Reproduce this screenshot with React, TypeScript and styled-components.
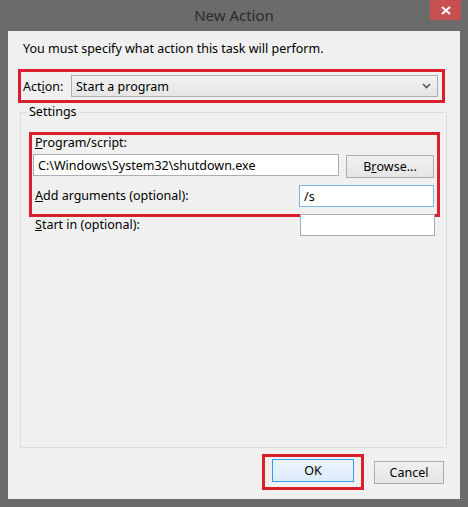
import React from 'react';
import styled, { createGlobalStyle } from 'styled-components';

const GlobalStyle = createGlobalStyle`
  html, body {
    margin: 0;
    padding: 0;
    background: #6b6b6b;
  }
  body {
    font-family: 'Noto Sans', 'Open Sans', sans-serif;
    font-size: 12.5px;
    color: #000;
  }
`;

const Frame = styled.div`
  width: 468px;
  height: 507px;
  display: flex;
  flex-direction: column;
  background: #6b6b6b;
  box-sizing: border-box;
`;

const TitleBar = styled.div`
  position: relative;
  height: 31px;
  display: flex;
  align-items: center;
  justify-content: center;
  flex-shrink: 0;
`;

const Title = styled.div`
  font-size: 15px;
  color: #2b2b2b;
  margin-top: -1px;
`;

const CloseButton = styled.div`
  position: absolute;
  top: 0;
  right: 7px;
  width: 31px;
  height: 20px;
  background: #c75050;
  display: flex;
  align-items: center;
  justify-content: center;
`;

const Client = styled.div`
  flex: 1;
  margin: 0 8px 8px;
  background: #f0f0f0;
  display: flex;
  flex-direction: column;
  padding: 10px 0 9px;
  box-sizing: border-box;
`;

const Intro = styled.div`
  line-height: 16px;
  padding-left: 15px;
  margin-bottom: 12px;
`;

const Highlight = styled.div<{ $pad: string }>`
  border: 3px solid #d9202c;
  padding: ${(p) => p.$pad};
  box-sizing: border-box;
`;

const ActionRow = styled(Highlight)`
  margin: 0 15px 0 10px;
  display: flex;
  align-items: center;
`;

const ActionLabel = styled.span`
  width: 48px;
  flex-shrink: 0;
`;

const Combo = styled.div`
  flex: 1;
  height: 22px;
  box-sizing: border-box;
  border: 1px solid #acacac;
  background: linear-gradient(#f2f2f2, #e5e5e5);
  display: flex;
  align-items: center;
  justify-content: space-between;
  padding: 0 6px 0 4px;
`;

const Group = styled.fieldset`
  flex: 1;
  margin: 1px 13px 0 12px;
  padding: 12px 0 0;
  border: 1px solid #dcdcdc;
  min-width: 0;
  display: flex;
  flex-direction: column;
`;

const Legend = styled.legend`
  margin-left: 6px;
  padding: 0 2px;
  line-height: 16px;
`;

const ProgramBox = styled(Highlight)`
  margin: 0 6px 0 8px;
  display: flex;
  flex-direction: column;
`;

const Label = styled.span`
  line-height: 16px;
`;

const Row = styled.div<{ $gap?: number }>`
  display: flex;
  align-items: center;
  margin-top: ${(p) => p.$gap ?? 0}px;
`;

const TextBox = styled.div<{ $focused?: boolean; $width: number }>`
  width: ${(p) => p.$width}px;
  height: 22px;
  box-sizing: border-box;
  background: #fff;
  border: 1px solid ${(p) => (p.$focused ? '#7eb4ea' : '#abadb3')};
  display: flex;
  align-items: center;
  padding-left: 4px;
  flex-shrink: 0;
`;

const Button = styled.div<{ $default?: boolean; $width: number }>`
  width: ${(p) => p.$width}px;
  height: 23px;
  box-sizing: border-box;
  border: 1px solid ${(p) => (p.$default ? '#3c9ae8' : '#acacac')};
  background: ${(p) => (p.$default ? 'linear-gradient(#ecf4fc, #dcecfc)' : 'linear-gradient(#f0f0f0, #e5e5e5)')};
  display: flex;
  align-items: center;
  justify-content: center;
  flex-shrink: 0;
`;

const Spacer = styled.div`
  flex: 1;
`;

const StartRow = styled.div`
  display: flex;
  align-items: center;
  margin: -3px 11px 0 14px;
`;

const Footer = styled.div`
  display: flex;
  align-items: center;
  justify-content: flex-end;
  gap: 10px;
  margin-top: 6px;
  padding-right: 16px;
`;

const OkBox = styled(Highlight)`
  display: flex;
`;

const Chevron = () => (
  <svg width="9" height="6" viewBox="0 0 9 6">
    <path d="M1 1 L4.5 4.5 L8 1" fill="none" stroke="#555" strokeWidth="1.6" />
  </svg>
);

const CloseIcon = () => (
  <svg width="10" height="9" viewBox="0 0 10 9">
    <path d="M1 1 L9 8 M9 1 L1 8" stroke="#fff" strokeWidth="2" />
  </svg>
);

export default function App() {
  return (
    <>
      <GlobalStyle />
      <Frame>
        <TitleBar>
          <Title>New Action</Title>
          <CloseButton>
            <CloseIcon />
          </CloseButton>
        </TitleBar>
        <Client>
          <Intro>You must specify what action this task will perform.</Intro>
          <ActionRow $pad="3px 4px 3px 2px">
            <ActionLabel>
              Act<u>i</u>on:
            </ActionLabel>
            <Combo>
              <span>Start a program</span>
              <Chevron />
            </Combo>
          </ActionRow>
          <Group>
            <Legend>Settings</Legend>
            <ProgramBox $pad="0 3px 7px 3px">
              <Label>
                <u>P</u>rogram/script:
              </Label>
              <Row $gap={3} style={{ alignItems: 'flex-start', marginLeft: -2 }}>
                <TextBox $width={306}>C:\Windows\System32\shutdown.exe</TextBox>
                <Spacer />
                <Button $width={88} style={{ marginTop: 1 }}>
                  B<u>r</u>owse...
                </Button>
              </Row>
              <Row $gap={7}>
                <Label>
                  <u>A</u>dd arguments (optional):
                </Label>
                <Spacer />
                <TextBox $width={135} $focused>
                  /s
                </TextBox>
              </Row>
            </ProgramBox>
            <StartRow>
              <Label>
                <u>S</u>tart in (optional):
              </Label>
              <Spacer />
              <TextBox $width={135} />
            </StartRow>
          </Group>
          <Footer>
            <OkBox $pad="2px 7px 5px">
              <Button $width={82} $default>
                OK
              </Button>
            </OkBox>
            <Button $width={70}>Cancel</Button>
          </Footer>
        </Client>
      </Frame>
    </>
  );
}
